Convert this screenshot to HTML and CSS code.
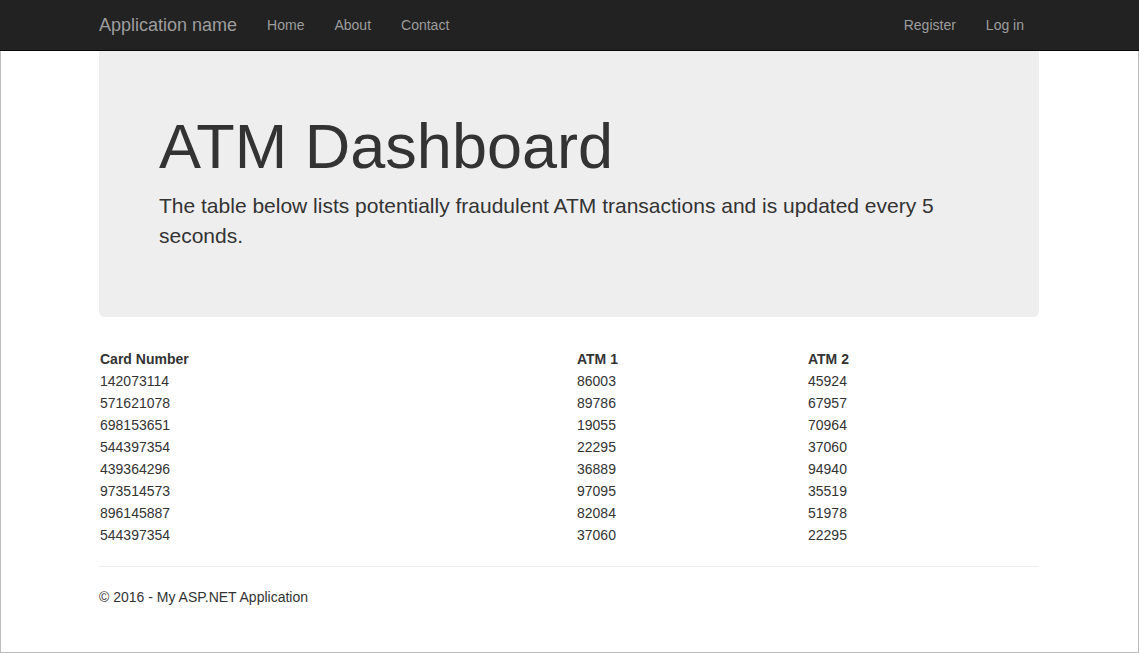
FILE: index.html
```html
<!DOCTYPE html>
<html>
<head>
<meta charset="utf-8">
<title>ATM Dashboard</title>
<link rel="stylesheet" href="styles.css">
</head>
<body>
<nav class="navbar">
  <div class="container nav-inner">
    <div class="nav-left">
      <a class="brand" href="#">Application name</a>
      <ul class="nav">
        <li><a href="#">Home</a></li>
        <li><a href="#">About</a></li>
        <li><a href="#">Contact</a></li>
      </ul>
    </div>
    <ul class="nav">
      <li><a href="#">Register</a></li>
      <li><a href="#">Log in</a></li>
    </ul>
  </div>
</nav>
<div class="frame">
  <div class="container main">
    <div class="jumbotron">
      <h1>ATM Dashboard</h1>
      <p>The table below lists potentially fraudulent ATM transactions and is updated every 5 seconds.</p>
    </div>
    <table class="data">
      <thead>
        <tr><th class="c1">Card Number</th><th class="c2">ATM 1</th><th>ATM 2</th></tr>
      </thead>
      <tbody>
        <tr><td>142073114</td><td>86003</td><td>45924</td></tr>
        <tr><td>571621078</td><td>89786</td><td>67957</td></tr>
        <tr><td>698153651</td><td>19055</td><td>70964</td></tr>
        <tr><td>544397354</td><td>22295</td><td>37060</td></tr>
        <tr><td>439364296</td><td>36889</td><td>94940</td></tr>
        <tr><td>973514573</td><td>97095</td><td>35519</td></tr>
        <tr><td>896145887</td><td>82084</td><td>51978</td></tr>
        <tr><td>544397354</td><td>37060</td><td>22295</td></tr>
      </tbody>
    </table>
    <hr class="rule">
    <footer class="footer">
      <p>&copy; 2016 - My ASP.NET Application</p>
    </footer>
  </div>
</div>
</body>
</html>
```

FILE: styles.css
```css
* { box-sizing: border-box; }
html, body { margin: 0; padding: 0; }
body {
  font-family: "Liberation Sans", Arial, Helvetica, sans-serif;
  font-size: 14px;
  line-height: 1.42857143;
  color: #333;
  background: #fff;
  width: 1139px;
  height: 653px;
  overflow: hidden;
}
a { text-decoration: none; }
.navbar {
  height: 51px;
  background: #222;
  border-bottom: 1px solid #080808;
}
.container {
  width: 970px;
  padding: 0 15px;
  margin: 0 auto;
}
.nav-inner {
  display: flex;
  justify-content: space-between;
  align-items: flex-start;
  margin-left: 84px;
}
.main { margin-left: 83px; }
.nav-left { display: flex; }
.brand {
  display: block;
  height: 50px;
  padding: 15px 15px;
  margin-left: -15px;
  font-size: 18px;
  line-height: 20px;
  color: #9d9d9d;
}
.nav {
  display: flex;
  list-style: none;
  margin: 0;
  padding: 0;
}
.nav a {
  display: block;
  padding: 15px;
  line-height: 20px;
  color: #9d9d9d;
}
.frame {
  height: 602px;
  border: 1px solid #bdbdbd;
  border-top: 0;
}
.jumbotron {
  background: #eee;
  border-radius: 0 0 6px 6px;
  padding: 41px 60px 48px;
  margin-bottom: 31px;
  height: 266px;
}
.jumbotron h1 {
  font-size: 63px;
  font-weight: 500;
  line-height: 1.1;
  margin: 20px 0 10px;
}
.jumbotron p {
  font-size: 21px;
  font-weight: 200;
  line-height: 1.4;
  margin: 0 0 15px;
}
.data {
  width: 100%;
  border-collapse: collapse;
  border-spacing: 0;
}
.data th, .data td {
  text-align: left;
  padding: 1px 1px;
  line-height: 20px;
  vertical-align: top;
}
.data .c1 { width: 477px; }
.data .c2 { width: 231px; }
.rule {
  margin: 20px 0;
  border: 0;
  border-top: 1px solid #eee;
}
.footer p { margin: 0 0 10px; }
```
